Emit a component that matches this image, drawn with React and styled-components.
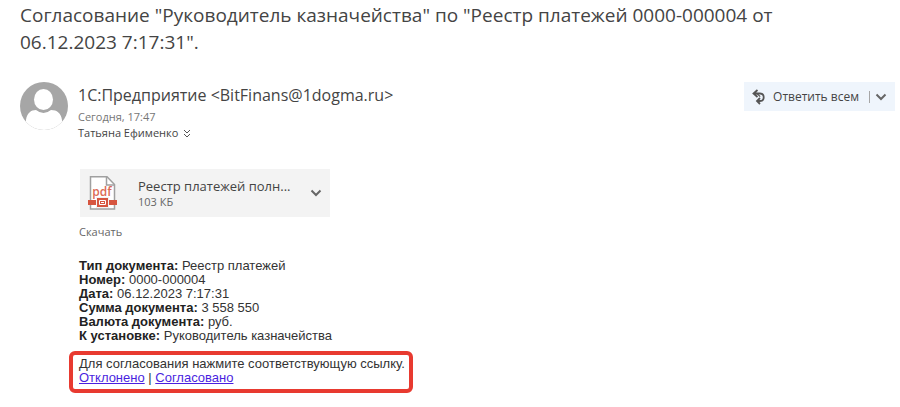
import React from 'react'
import styled, { createGlobalStyle } from 'styled-components'

const GlobalStyle = createGlobalStyle`
    * {
        box-sizing: border-box;
    }

    body {
        margin: 0;
        background: #fff;
        color: #444;
        font-family: 'Open Sans', 'Noto Sans', sans-serif;
    }

    button {
        border: 0;
        color: inherit;
        font-family: inherit;
        cursor: pointer;
    }
`

const Page = styled.main`
    padding: 2px 5px 14px 20px;
`

const Subject = styled.h1`
    max-width: 800px;
    margin: 0;
    color: #444;
    font-size: 19px;
    font-weight: 400;
    line-height: 27px;
`

const Header = styled.header`
    display: flex;
    align-items: flex-start;
    gap: 10px;
    margin-top: 26px;
`

const Sender = styled.div`
    flex: 1;
    min-width: 0;
`

const SenderName = styled.div`
    color: #444;
    font-size: 16px;
    line-height: 27px;
`

const SentAt = styled.div`
    color: #767676;
    font-size: 11px;
    line-height: 15px;
`

const Recipients = styled.div`
    display: flex;
    align-items: center;
    gap: 5px;
    color: #444;
    font-size: 11px;
    line-height: 18px;
`

const ExpandButton = styled.button`
    display: flex;
    padding: 0;
    background: none;
`

const ReplyGroup = styled.div`
    display: flex;
    align-items: center;
    height: 29px;
    padding: 0 8px;
    background: #eff5fc;
`

const ReplyButton = styled.button`
    display: flex;
    align-items: center;
    gap: 8px;
    padding: 0 10px 0 0;
    background: none;
    font-size: 12px;
    line-height: 20px;
`

const ReplyMenuButton = styled.button`
    display: flex;
    align-items: center;
    height: 12px;
    padding: 0 0 0 5px;
    border-left: 1px solid #a6a6a6;
    background: none;
`

const Body = styled.section`
    padding: 27px 0 0 49px;
`

const Attachment = styled.div`
    display: flex;
    align-items: center;
    width: 250px;
    height: 48px;
    margin-left: 11px;
    padding: 0 8px;
    background: #f3f3f3;
`

const FileInfo = styled.div`
    flex: 1;
    min-width: 0;
    margin-left: 21px;
`

const FileName = styled.div`
    color: #444;
    font-size: 13px;
    line-height: 18px;
    white-space: nowrap;
`

const FileSize = styled.div`
    color: #666;
    font-size: 11px;
    line-height: 14px;
`

const Download = styled.a`
    display: block;
    width: fit-content;
    margin: 6px 0 0 10px;
    color: #666;
    font-size: 11px;
    line-height: 18px;
    text-decoration: none;
`

const Message = styled.div`
    margin-top: 18px;
    color: #333;
    font-family: 'Liberation Sans', Arial, sans-serif;
    font-size: 13px;
    line-height: 14px;
`

const Fields = styled.div`
    padding-left: 10px;

    b {
        color: #222;
    }
`

const Approval = styled.div`
    width: fit-content;
    margin-top: 8px;
    padding: 2px 4px 4px 6px;
    border: 4px solid #e83a30;
    border-radius: 6px;

    a {
        color: #4a1fe0;
    }
`

const fields = [
    ['Тип документа', 'Реестр платежей'],
    ['Номер', '0000-000004'],
    ['Дата', '06.12.2023 7:17:31'],
    ['Сумма документа', '3 558 550'],
    ['Валюта документа', 'руб.'],
    ['К установке', 'Руководитель казначейства'],
]

const Avatar = () => (
    <svg width="48" height="48" viewBox="0 0 48 48" aria-hidden="true">
        <clipPath id="avatar">
            <circle cx="24" cy="24" r="24" />
        </clipPath>
        <g clipPath="url(#avatar)">
            <rect width="48" height="48" fill="#a6a6a6" />
            <path
                d="M6 48V38C7 31 11 28 16 28Q23.500 34 31 28C37 28 41 31 42 38V48Z"
                fill="#fff"
            />
            <ellipse cx="23.500" cy="17.500" rx="9.500" ry="10.500" fill="#fff" />
        </g>
    </svg>
)

const Chevron = () => (
    <svg width="12" height="8" viewBox="0 0 12 8" fill="none" aria-hidden="true">
        <path d="M1.500 1.500L6 6L10.500 1.500" stroke="#666" strokeWidth="2" />
    </svg>
)

const DoubleChevron = () => (
    <svg width="8" height="9" viewBox="0 0 8 9" fill="none" aria-hidden="true">
        <path d="M1 1L4 4L7 1M1 5L4 8L7 5" stroke="#555" />
    </svg>
)

const ReplyAllIcon = () => (
    <svg width="13" height="16" viewBox="0 0 13 16" fill="none" aria-hidden="true">
        <path
            d="M5.500 1L1.500 4.500L5.500 8M1.500 4.500H8C10.500 4.500 11.700 6 11.700 8.200S10.500 12 8 12H5M8 9L5 12L8 15"
            stroke="#555"
            strokeWidth="1.800"
        />
        <path d="M5 4.500L8.200 7.600" stroke="#555" strokeWidth="1.300" />
    </svg>
)

const PdfIcon = () => (
    <svg width="29" height="34" viewBox="0 0 29 34" aria-hidden="true">
        <path
            d="M2.500 .8H19L26.500 8.500V33H2.500Z"
            fill="#fff"
            stroke="#a0a0a0"
            strokeWidth="1.500"
        />
        <path d="M18.500 1V9H26.500" fill="none" stroke="#a0a0a0" strokeWidth="1.500" />
        <text x="14" y="20" textAnchor="middle" fontSize="12" fontWeight="600" fill="#dc6a55">
            pdf
        </text>
        <path d="M0 24H29V29H0Z" fill="#d6553f" />
        <path d="M8.500 21.500H20.500V31.500H8.500Z" fill="#d6553f" stroke="#f3f3f3" />
        <path d="M11.500 24.500H17.500V28.500H11.500Z" fill="none" stroke="#fff" />
        <path d="M13 26H16V27H13Z" fill="#fff" />
    </svg>
)

const MessageHeader = () => (
    <Header>
        <Avatar />
        <Sender>
            <SenderName>1С:Предприятие &lt;BitFinans@1dogma.ru&gt;</SenderName>
            <SentAt>Сегодня, 17:47</SentAt>
            <Recipients>
                Татьяна Ефименко
                <ExpandButton aria-label="Показать получателей">
                    <DoubleChevron />
                </ExpandButton>
            </Recipients>
        </Sender>
        <ReplyGroup>
            <ReplyButton>
                <ReplyAllIcon />
                Ответить всем
            </ReplyButton>
            <ReplyMenuButton aria-label="Другие действия">
                <Chevron />
            </ReplyMenuButton>
        </ReplyGroup>
    </Header>
)

const App = () => (
    <React.Fragment>
        <GlobalStyle />
        <Page>
            <Subject>
                Согласование "Руководитель казначейства" по "Реестр платежей
                0000-000004 от 06.12.2023 7:17:31".
            </Subject>
            <MessageHeader />
            <Body>
                <Attachment>
                    <PdfIcon />
                    <FileInfo>
                        <FileName>Реестр платежей полн...</FileName>
                        <FileSize>103 КБ</FileSize>
                    </FileInfo>
                    <ExpandButton aria-label="Действия с вложением">
                        <Chevron />
                    </ExpandButton>
                </Attachment>
                <Download href="#download">Скачать</Download>
                <Message>
                    <Fields>
                        {fields.map(([label, value]) => (
                            <div key={label}>
                                <b>{label}:</b> {value}
                            </div>
                        ))}
                    </Fields>
                    <Approval>
                        Для согласования нажмите соответствующую ссылку.
                        <br />
                        <a href="#reject">Отклонено</a> | <a href="#approve">Согласовано</a>
                    </Approval>
                </Message>
            </Body>
        </Page>
    </React.Fragment>
)

export default App
